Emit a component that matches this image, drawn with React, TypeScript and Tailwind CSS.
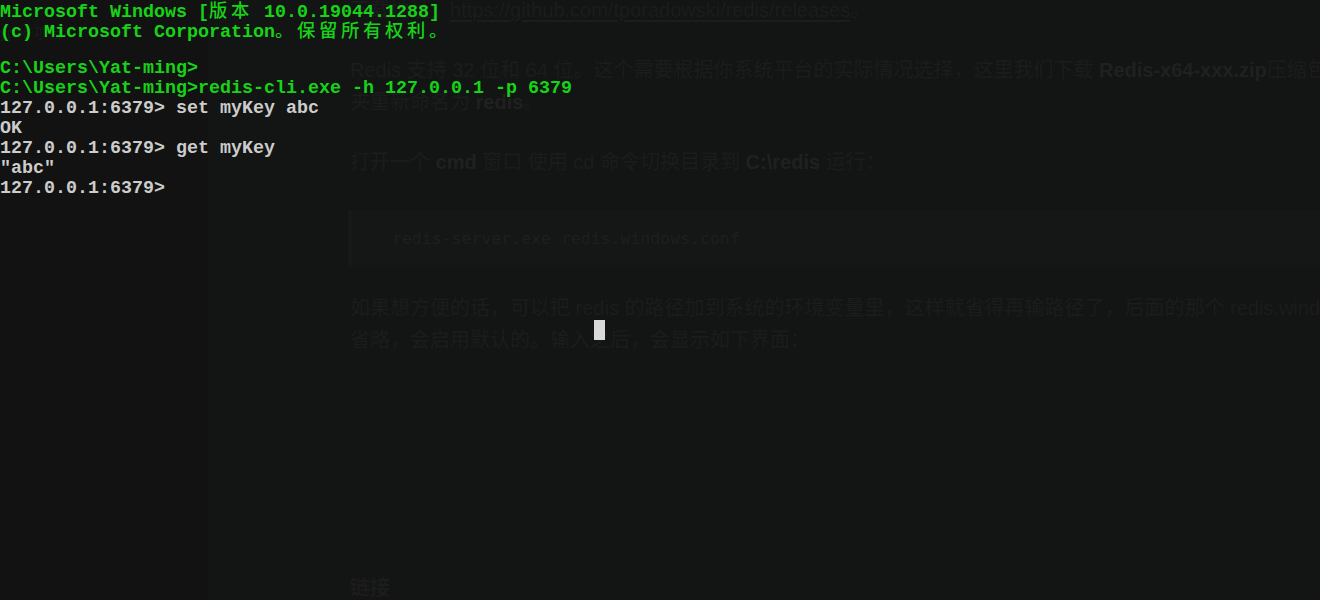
import React from "react";

// console rows on top of the page
const green = "text-[#17d317]";
const grey = "text-[#cccccc]";

function Wide({ children }: { children: React.ReactNode }) {
  // full-width glyphs take two console cells (22px)
  return (
    <span className="tracking-[3.67px] leading-[20px] [font-family:'Noto_Sans_CJK_SC',sans-serif] font-medium">{children}</span>
  );
}

const rows: { cls: string; content: React.ReactNode }[] = [
  {
    cls: green,
    content: (
      <>
        Microsoft Windows [<Wide>版本</Wide> 10.0.19044.1288]
      </>
    ),
  },
  {
    cls: green,
    content: (
      <>
        (c) Microsoft Corporation<Wide>。保留所有权利。</Wide>
      </>
    ),
  },
  { cls: green, content: "\u00a0" },
  { cls: green, content: "C:\\Users\\Yat-ming>" },
  { cls: green, content: "C:\\Users\\Yat-ming>redis-cli.exe -h 127.0.0.1 -p 6379" },
  { cls: grey, content: "127.0.0.1:6379> set myKey abc" },
  { cls: grey, content: "OK" },
  { cls: grey, content: "127.0.0.1:6379> get myKey" },
  { cls: grey, content: '"abc"' },
  { cls: grey, content: "127.0.0.1:6379>" },
];

export default function App() {
  return (
    <div className="relative w-[1320px] h-[600px] overflow-hidden bg-[#131414] flex [font-family:'Liberation_Sans','Noto_Sans_CJK_SC',sans-serif]">
      {/* --- sidebar behind the console --- */}
      <aside className="w-[208px] shrink-0 bg-[#121212] pt-[21px]">
        <span className="text-[14px] text-[#1b1b1b]">ypoo 项目</span>
      </aside>

      {/* --- article --- */}
      <article className="w-[1400px] shrink-0 pl-[142px] -mt-[6px] text-[20px] leading-[32px] text-[#1c1c1c]">
        <p>
          下载地址：
          <span className="underline underline-offset-[3px]">https://github.com/tporadowski/redis/releases</span>。
        </p>
        <p className="mt-[28px]">
          Redis 支持 32 位和 64 位。这个需要根据你系统平台的实际情况选择，这里我们下载 <b className="text-[#202020]">Redis-x64-xxx.zip</b>压缩包到 C 盘，解压后，将文件
          <br />
          夹重新命名为 <b className="text-[#202020]">redis</b>。
        </p>
        <p className="mt-[28px]">
          打开一个 <b className="text-[#202020]">cmd</b> 窗口 使用 cd 命令切换目录到 <b className="text-[#202020]">C:\redis</b> 运行：
        </p>
        <pre className="mt-[32px] -ml-[2px] w-[1100px] bg-[#151616] border-l-[4px] border-[#171818] pl-[40px] py-[16px] text-[16.5px] leading-[25px] text-[#1f1f1f] [font-family:'DejaVu_Sans_Mono',monospace]">
          redis-server.exe redis.windows.conf
        </pre>
        <p className="mt-[25px]">
          如果想方便的话，可以把 redis 的路径加到系统的环境变量里，这样就省得再输路径了，后面的那个 redis.windows.conf 也可以
          <br />
          省略，会启用默认的。输入之后，会显示如下界面：
        </p>
        <h2 className="mt-[220px] text-[20px] leading-[24px] font-bold text-[#1c1c1c]">链接</h2>
      </article>

      {/* --- console window text, lying over the page --- */}
      <div className="absolute left-0 -top-[1px] text-[18.33px] leading-[20px] font-bold whitespace-pre [font-family:'Liberation_Mono','Noto_Sans_CJK_SC',monospace]">
        {rows.map((r, i) => (
          <div key={i} className={`h-[20px] overflow-visible ${r.cls}`}>
            {r.content}
          </div>
        ))}
      </div>

      {/* console caret */}
      <div className="absolute left-[594px] top-[320px] w-[11px] h-[20px] bg-[#d9d9d9]" />
    </div>
  );
}
